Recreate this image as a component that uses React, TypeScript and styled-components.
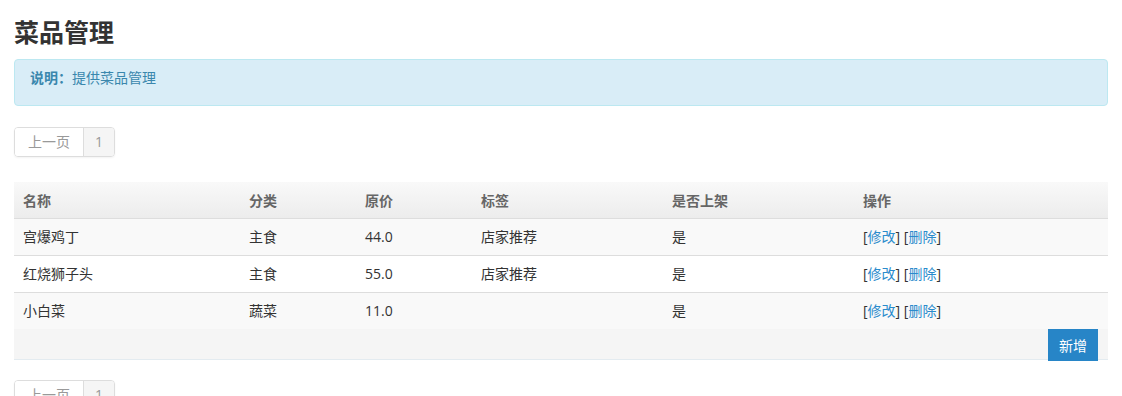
import React from 'react'
import styled, { createGlobalStyle } from 'styled-components'

const GlobalStyle = createGlobalStyle`
  html, body {
    margin: 0;
    padding: 0;
    background: #fff;
  }
  body {
    font-family: 'Open Sans', 'Noto Sans CJK SC', sans-serif;
    font-size: 14px;
    color: #333;
  }
  * {
    box-sizing: border-box;
  }
`

const Page = styled.div`
  padding: 14px 14px 0;
`

const Title = styled.h1`
  margin: 0 0 9px;
  font-size: 25px;
  line-height: 36px;
  font-weight: 700;
  color: #333;
`

const Alert = styled.div`
  height: 47px;
  padding: 8px 15px 0;
  background: #d9edf7;
  border: 1px solid #bce8f1;
  border-radius: 4px;
  color: #3a87ad;
  line-height: 20px;
`

const AlertLabel = styled.strong`
  font-weight: 700;
`

const Pager = styled.div<{ $top: number }>`
  display: flex;
  margin-top: ${(p) => p.$top}px;
  height: 30px;
`

const PagerGroup = styled.div`
  display: flex;
  border: 1px solid #ddd;
  border-radius: 4px;
  box-shadow: 0 1px 2px rgba(0, 0, 0, 0.05);
  overflow: hidden;
`

const PagerItem = styled.span<{ $active?: boolean }>`
  display: flex;
  align-items: center;
  justify-content: center;
  padding: 0 ${(p) => (p.$active ? 11 : 13)}px;
  color: #999;
  background: ${(p) => (p.$active ? '#f5f5f5' : '#fff')};
  border-left: ${(p) => (p.$active ? '1px solid #ddd' : 'none')};
  line-height: 28px;
`

const Table = styled.table`
  width: 100%;
  margin-top: 25px;
  border-collapse: collapse;
  table-layout: fixed;
`

const HeadCell = styled.th<{ $w?: number }>`
  width: ${(p) => (p.$w ? `${p.$w}px` : 'auto')};
  height: 36px;
  padding: 0 9px;
  text-align: left;
  font-weight: 700;
  color: #666;
  background: linear-gradient(to bottom, #f9f9f9 0%, #ececec 100%);
  border-bottom: 1px solid #ddd;
`

const Row = styled.tr<{ $striped?: boolean }>`
  background: ${(p) => (p.$striped ? '#f9f9f9' : '#fff')};
`

const Cell = styled.td<{ $last?: boolean }>`
  height: 37px;
  padding: 0 9px 1px;
  color: #333;
  border-bottom: ${(p) => (p.$last ? 'none' : '1px solid #ddd')};
  white-space: nowrap;
`

const Action = styled.a`
  color: #2a8bcc;
  text-decoration: none;
`

const Footer = styled.div`
  display: flex;
  justify-content: flex-end;
  align-items: flex-start;
  height: 31px;
  padding-right: 10px;
  background: #f5f5f5;
  border-bottom: 1px solid #e3ebf0;
`

const AddButton = styled.button`
  width: 50px;
  height: 32px;
  border: none;
  border-radius: 0;
  background: #2785c7;
  color: #fff;
  font-family: inherit;
  font-size: 14px;
  cursor: pointer;
  position: relative;
`

const columns = [
  { title: '名称', w: 226 },
  { title: '分类', w: 116 },
  { title: '原价', w: 116 },
  { title: '标签', w: 191 },
  { title: '是否上架', w: 191 },
  { title: '操作' },
]

const dishes = [
  { name: '宫爆鸡丁', cat: '主食', price: '44.0', tag: '店家推荐', on: '是' },
  { name: '红烧狮子头', cat: '主食', price: '55.0', tag: '店家推荐', on: '是' },
  { name: '小白菜', cat: '蔬菜', price: '11.0', tag: '', on: '是' },
]

const Pagination = ({ top }: { top: number }) => (
  <Pager $top={top}>
    <PagerGroup>
      <PagerItem>上一页</PagerItem>
      <PagerItem $active>1</PagerItem>
    </PagerGroup>
  </Pager>
)

export default function App() {
  return (
    <Page>
      <GlobalStyle />
      <Title>菜品管理</Title>
      <Alert>
        <AlertLabel>说明：</AlertLabel>提供菜品管理
      </Alert>
      <Pagination top={21} />
      <Table>
        <thead>
          <tr>
            {columns.map((c) => (
              <HeadCell key={c.title} $w={c.w}>
                {c.title}
              </HeadCell>
            ))}
          </tr>
        </thead>
        <tbody>
          {dishes.map((d, i) => {
            const last = i === dishes.length - 1
            return (
              <Row key={d.name} $striped={i % 2 === 0}>
                <Cell $last={last}>{d.name}</Cell>
                <Cell $last={last}>{d.cat}</Cell>
                <Cell $last={last}>{d.price}</Cell>
                <Cell $last={last}>{d.tag}</Cell>
                <Cell $last={last}>{d.on}</Cell>
                <Cell $last={last}>
                  [<Action href="#">修改</Action>] [<Action href="#">删除</Action>]
                </Cell>
              </Row>
            )
          })}
        </tbody>
      </Table>
      <Footer>
        <AddButton>新增</AddButton>
      </Footer>
      <Pagination top={20} />
    </Page>
  )
}
